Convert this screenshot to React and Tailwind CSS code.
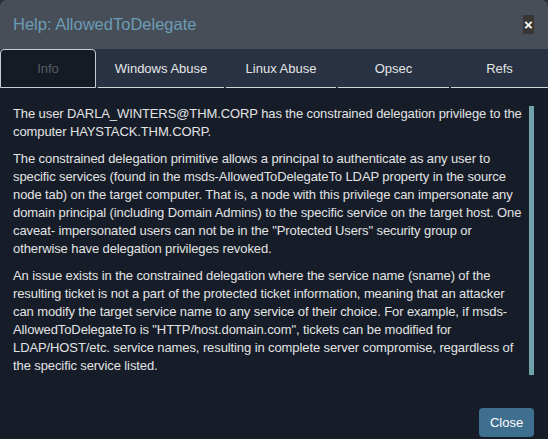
import React, { useState } from 'react';

const tabs = [
  { label: 'Info', width: 'w-[96px]' },
  { label: 'Windows Abuse', width: 'w-[126px]' },
  { label: 'Linux Abuse', width: 'w-[110px]' },
  { label: 'Opsec', width: 'w-[111px]' },
  { label: 'Refs', width: 'flex-1' },
];

const App = () => {
  const [active, setActive] = useState('Info');

  return (
    <div className="h-[439px] w-[548px] bg-[#2b3037] font-['Liberation_Sans',Arial,sans-serif]">
      <div className="flex h-full flex-col overflow-hidden rounded-t-[6px] bg-[#161d28]">
        {/* Cabeçalho */}
        <div className="flex h-[49px] shrink-0 items-center justify-between bg-[#474e57] pl-[13px] pr-[14px]">
          <h4 className="text-[16.5px] font-normal leading-none text-[#6c9cb6]">Help: AllowedToDelegate</h4>
          <button className="mb-[1px] flex h-[19px] w-[11px] items-center justify-center bg-[#3a3636] text-[15px] font-bold leading-none text-white">
            ×
          </button>
        </div>

        {/* Abas */}
        <div className="flex h-[39px] shrink-0 gap-[1px] bg-[#283242]">
          {tabs.map((tab) =>
            tab.label === active ? (
              <button
                key={tab.label}
                onClick={() => setActive(tab.label)}
                className={`${tab.width} rounded-t-[4px] border border-[#c9cbce] bg-[#151b25] text-[13px] font-normal text-[#565d67]`}
              >
                {tab.label}
              </button>
            ) : (
              <button
                key={tab.label}
                onClick={() => setActive(tab.label)}
                className={`${tab.width} ml-[1px] border-b border-[#d2d4d7] pt-[1px] text-[13px] font-normal text-[#e4e5e7]`}
              >
                {tab.label}
              </button>
            )
          )}
        </div>

        {/* Conteúdo */}
        <div className="flex pl-[13px] pt-[17px]">
          <div className="w-[513px] text-[13px] leading-[18px] tracking-[-0.1px] text-[#e2e3e5]">
            <p className="mb-[9px]">
              The user DARLA_WINTERS@THM.CORP has the constrained delegation privilege to the computer
              HAYSTACK.THM.CORP.
            </p>
            <p className="mb-[9px]">
              The constrained delegation primitive allows a principal to authenticate as any user to
              specific services (found in the msds-AllowedToDelegateTo LDAP property in the source node
              tab) on the target computer. That is, a node with this privilege can impersonate any domain
              principal (including Domain Admins) to the specific service on the target host. One caveat-
              impersonated users can not be in the "Protected Users" security group or otherwise have
              delegation privileges revoked.
            </p>
            <p>
              An issue exists in the constrained delegation where the service name (sname) of the
              resulting ticket is not a part of the protected ticket information, meaning that an attacker
              can modify the target service name to any service of their choice. For example, if
              msds-AllowedToDelegateTo is "HTTP/host.domain.com", tickets can be modified for
              LDAP/HOST/etc. service names, resulting in complete server compromise, regardless of the
              specific service listed.
            </p>
          </div>
          <div className="ml-[3px] mt-[1px] h-[269px] w-[5px] bg-[#6fa2aa]" />
        </div>

        {/* Rodapé */}
        <div className="mt-auto flex justify-end pb-[2px] pr-[14px]">
          <button className="h-[29px] w-[55px] rounded-[4px] bg-[#3f6f8e] text-[13px] text-white">
            Close
          </button>
        </div>
      </div>
    </div>
  );
};

export default App;
